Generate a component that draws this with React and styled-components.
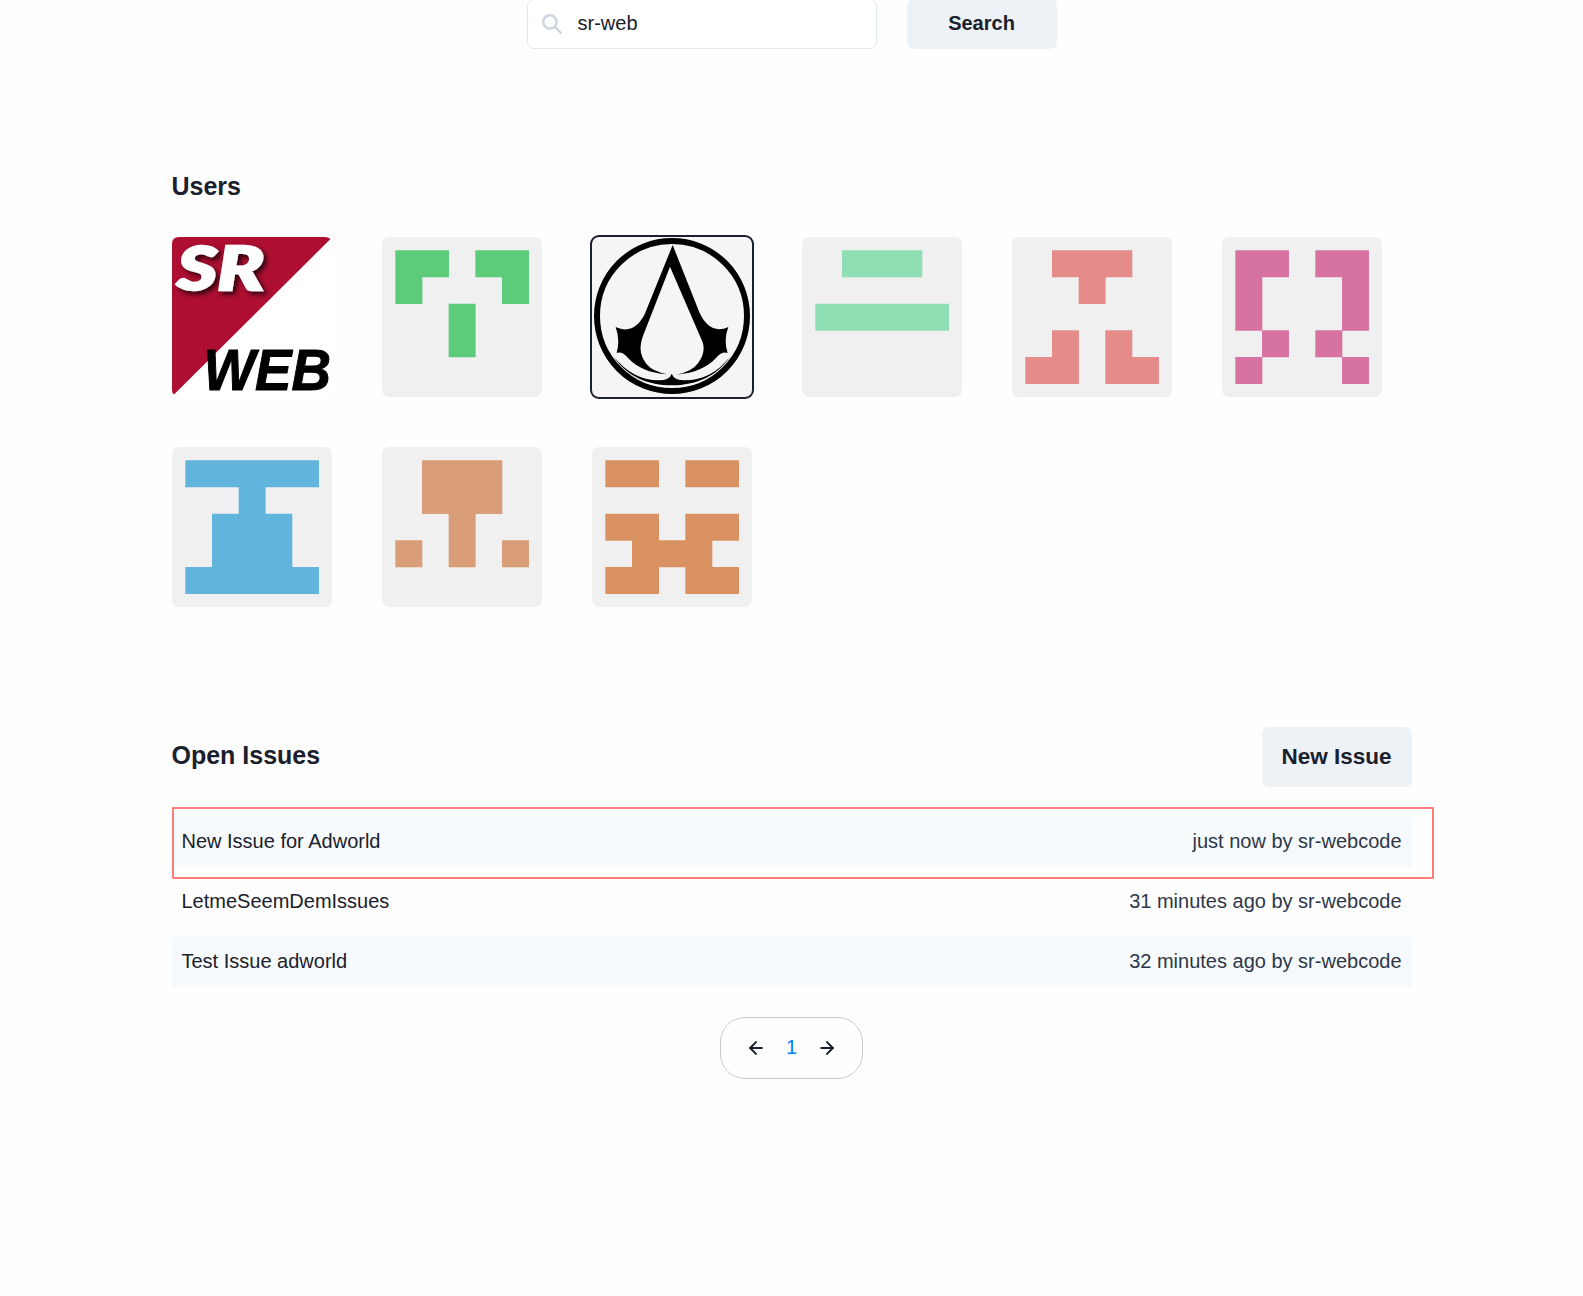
import React from "react";
import styled, { createGlobalStyle } from "styled-components";
import { ArrowLeft, ArrowRight } from "lucide-react";

const GlobalStyle = createGlobalStyle`
  *, *::before, *::after { box-sizing: border-box; }
  body {
    margin: 0;
    background: #fefefe;
    color: #1a202c;
    font-family: "Liberation Sans", Arial, sans-serif;
    font-size: 20px;
    overflow: hidden;
  }
`;

const Page = styled.main`
  display: flex;
  flex-direction: column;
  align-items: center;
  height: 1296px;
  overflow: hidden;
`;

const SearchBar = styled.form`
  display: flex;
  gap: 30px;
  margin-top: -1px;
`;

const SearchField = styled.label`
  display: flex;
  align-items: center;
  gap: 15px;
  width: 350px;
  height: 50px;
  padding: 0 14px;
  border: 1px solid #e2e8f0;
  border-radius: 7px;
  background: #fff;
  svg {
    flex: none;
    width: 20px;
    height: 20px;
    fill: #cbd5e0;
    stroke: #cbd5e0;
    stroke-width: 0.4;
    overflow: visible;
  }
`;

const SearchInput = styled.input`
  width: 100%;
  padding: 0 0 2px 1px;
  border: 0;
  outline: 0;
  background: transparent;
  color: inherit;
  font: inherit;
`;

const Button = styled.button`
  width: 150px;
  height: ${(p) => p.$height}px;
  padding: 0 0 ${(p) => p.$lift || 0}px;
  border: 0;
  border-radius: 7px;
  background: #edf2f7;
  color: inherit;
  font-family: inherit;
  font-size: ${(p) => p.$size}px;
  font-weight: 700;
`;

const Section = styled.section`
  width: 1240px;
  margin-top: ${(p) => p.$top}px;
`;

const SectionHeader = styled.header`
  display: flex;
  align-items: center;
  justify-content: space-between;
  height: 60px;
  margin-bottom: 20px;
`;

const Title = styled.h2`
  margin: 0;
  padding-bottom: ${(p) => p.$lift}px;
  font-size: 25px;
  font-weight: 700;
`;

const UserGrid = styled.div`
  display: grid;
  grid-template-columns: repeat(6, 160px);
  gap: 50px;
`;

const Avatar = styled.div`
  width: 160px;
  height: 160px;
  border-radius: 7px;
  background: ${(p) => p.$bg || "#f0f0f0"};
  box-shadow: ${(p) => (p.$selected ? "0 0 0 2px #1a202c" : "none")};
  svg { display: block; width: 160px; height: 160px; overflow: visible; }
`;

const IssueHighlight = styled.div`
  position: relative;
  &::after {
    content: "";
    position: absolute;
    left: 0;
    top: -10px;
    width: 1262px;
    height: 72px;
    border: 2px solid #ff7c7c;
    border-radius: 1px;
  }
`;

const IssueList = styled.div`
  display: flex;
  flex-direction: column;
  gap: 10px;
  padding-top: 10px;
`;

const IssueRow = styled.article`
  display: flex;
  align-items: center;
  justify-content: space-between;
  height: 50px;
  padding: 0 10px 2px;
  background: ${(p) => (p.$shaded ? "#f7fafc" : "transparent")};
`;

const IssueMeta = styled.span`
  color: #2d3748;
`;

const Pager = styled.nav`
  display: flex;
  align-items: center;
  gap: 20px;
  height: 62px;
  margin-top: 30px;
  padding: 0 25px;
  border: 1px solid #cbcbcb;
  border-radius: 25px;
`;

const PageNumber = styled.span`
  padding-bottom: 1px;
  color: #0080ff;
`;

const identicons = {
  green: ["#5ccc7a", ["11011", "10001", "00100", "00100", "00000"]],
  mint: ["#8fdeb4", ["01110", "00000", "11111", "00000", "00000"]],
  coral: ["#e58c8a", ["01110", "00100", "00000", "01010", "11011"]],
  pink: ["#d673a2", ["11011", "10001", "10001", "01010", "10001"]],
  blue: ["#61b5dc", ["11111", "00100", "01110", "01110", "11111"]],
  tan: ["#d99e77", ["01110", "01110", "00100", "10101", "00000"]],
  orange: ["#da9162", ["11011", "00000", "11011", "01110", "11011"]],
};

function Identicon({ name }) {
  const [color, rows] = identicons[name];
  // Cells overlap by a fraction so neighbours join without a seam.
  const path = rows
    .flatMap((row, y) =>
      [...row].map((on, x) => (on === "1" ? `M${35 + x * 70} ${35 + y * 70}h70.8v70.8h-70.8z` : ""))
    )
    .join("");
  return (
    <Avatar>
      <svg viewBox="0 0 420 420">
        <path d={path} fill={color} />
      </svg>
    </Avatar>
  );
}

function SrWebAvatar() {
  return (
    <Avatar $bg="#fff">
      <svg viewBox="0 0 160 160">
        <defs>
          <filter id="srShadow" x="-20%" y="-20%" width="150%" height="150%">
            <feDropShadow dx="3" dy="3" stdDeviation="2.5" floodColor="#000" floodOpacity="0.75" />
          </filter>
        </defs>
        <path d="M0 7Q0 0 7 0H153Q156 0 158.5 2L2 157.5Q0 156 0 153Z" fill="#ad0e31" />
        <text
          x="5" y="53" fontSize="61" fontWeight="900" fontStyle="italic"
          fontFamily="Lato, sans-serif" textLength="87" lengthAdjust="spacingAndGlyphs"
          fill="#fff" stroke="#fff" strokeWidth="2.5" filter="url(#srShadow)"
        >SR</text>
        <text
          x="31.5" y="152.5" fontSize="57" fontWeight="700" fontStyle="italic"
          fontFamily="Liberation Sans, sans-serif" textLength="127.5" lengthAdjust="spacingAndGlyphs"
          fill="#000" stroke="#000" strokeWidth="1"
        >WEB</text>
      </svg>
    </Avatar>
  );
}

function EmblemAvatar() {
  return (
    <Avatar $bg="#f5f5f5" $selected>
      <svg viewBox="36 36 480 480">
        <circle cx="276" cy="273" r="225" fill="none" stroke="#000" strokeWidth="18" />
        <path d="M278 60L358 262C376 302 405 325 445 306Q430 345 443 384Q426 378 408 399C380 428 345 444 290 449Q336 440 354 415Q378 382 368 352L270 125L188 335C177 370 180 390 200 418Q218 440 262 448C207 444 172 428 144 399Q126 378 110 384Q121 345 107 306C148 325 176 304 194 268Z" />
        <path d="M102 396C142 444 188 466 236 466Q269 466 275 446Q282 466 315 466C364 466 412 444 449 396C412 454 346 481 276 481S142 456 102 396Z" />
      </svg>
    </Avatar>
  );
}

const issues = [
  { title: "New Issue for Adworld", meta: "just now by sr-webcode", highlighted: true },
  { title: "LetmeSeemDemIssues", meta: "31 minutes ago by sr-webcode" },
  { title: "Test Issue adworld", meta: "32 minutes ago by sr-webcode" },
];

export default function App() {
  return (
    <>
      <GlobalStyle />
      <Page>
        <SearchBar>
          <SearchField>
            <svg viewBox="0 0 24 24">
              <path d="M23.384,21.619,16.855,15.09a9.284,9.284,0,1,0-1.768,1.768l6.529,6.529a1.266,1.266,0,0,0,1.768,0A1.251,1.251,0,0,0,23.384,21.619ZM2.75,9.5a6.75,6.75,0,1,1,6.75,6.75A6.758,6.758,0,0,1,2.75,9.5Z" />
            </svg>
            <SearchInput defaultValue="sr-web" />
          </SearchField>
          <Button type="button" $height={50} $size={20} $lift={2}>Search</Button>
        </SearchBar>

        <Section $top={108}>
          <SectionHeader>
            <Title $lift={2}>Users</Title>
          </SectionHeader>
          <UserGrid>
            <SrWebAvatar />
            <Identicon name="green" />
            <EmblemAvatar />
            <Identicon name="mint" />
            <Identicon name="coral" />
            <Identicon name="pink" />
            <Identicon name="blue" />
            <Identicon name="tan" />
            <Identicon name="orange" />
          </UserGrid>
        </Section>

        <Section $top={120}>
          <SectionHeader>
            <Title $lift={4}>Open Issues</Title>
            <Button type="button" $height={60} $size={22.5}>New Issue</Button>
          </SectionHeader>
          <IssueList>
            {issues.map(({ title, meta, highlighted }, i) => {
              const row = (
                <IssueRow key={title} $shaded={i % 2 === 0}>
                  <span>{title}</span>
                  <IssueMeta>{meta}</IssueMeta>
                </IssueRow>
              );
              return highlighted ? <IssueHighlight key={title}>{row}</IssueHighlight> : row;
            })}
          </IssueList>
        </Section>

        <Pager>
          <ArrowLeft size={20} strokeWidth={2.4} />
          <PageNumber>1</PageNumber>
          <ArrowRight size={20} strokeWidth={2.4} />
        </Pager>
      </Page>
    </>
  );
}
